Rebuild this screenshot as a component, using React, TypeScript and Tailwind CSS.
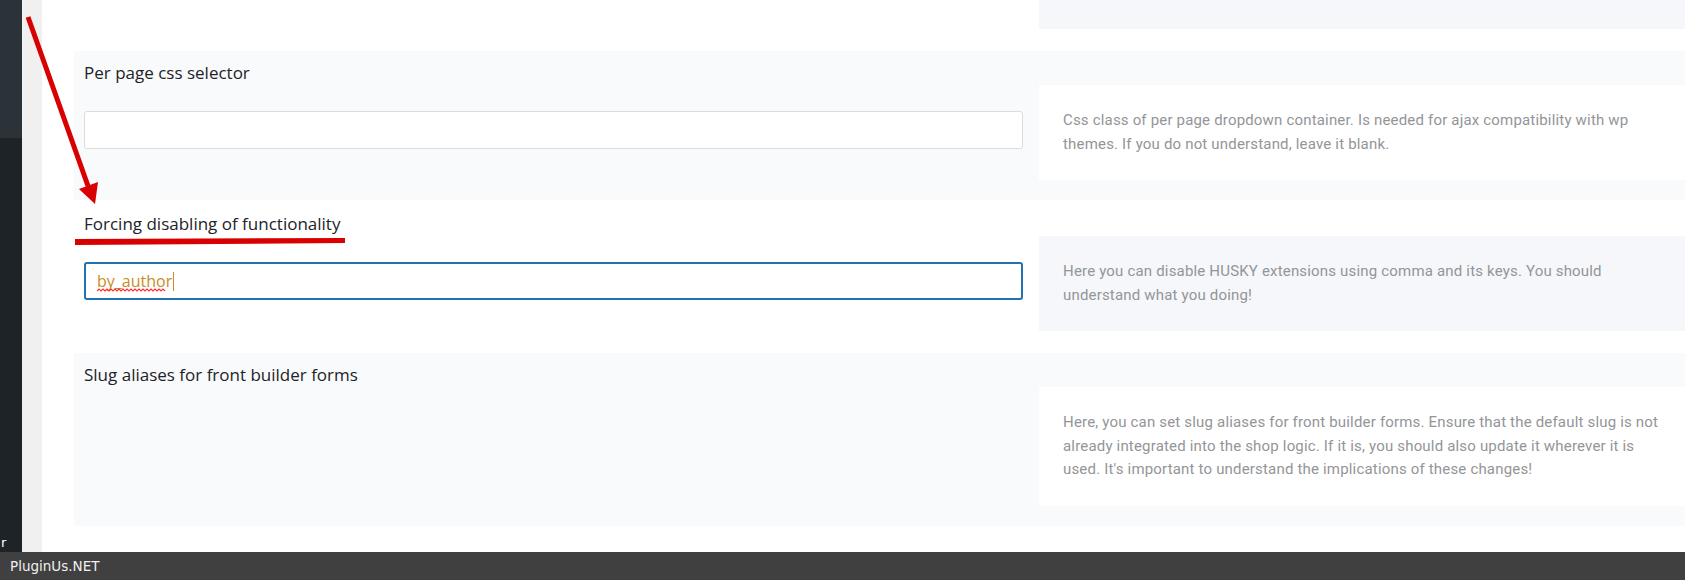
import React from "react";

const titleFont = { fontFamily: '"Open Sans", "Noto Sans", sans-serif' };
const descFont = { fontFamily: 'Roboto, "Liberation Sans", sans-serif' };

type RowProps = {
  light: boolean;
  title?: string;
  field?: "empty" | "focused" | "none";
  lines: string[];
};

function Row({ light, title, field = "none", lines }: RowProps) {
  return (
    <section
      className={
        light
          ? "bg-[#f9fafc] pt-[10px] pb-[20px] pl-[10px]"
          : "bg-white pt-[10px] pb-[20px] pl-[10px]"
      }
    >
      <h3 className="h-6 text-[17px] leading-6 text-[#1d2327]" style={titleFont}>
        {title}
      </h3>
      <div className="flex">
        <div className="w-[939px] shrink-0 pt-[26px]">
          {field === "empty" && (
            <div className="h-[38px] rounded-[3px] border border-[#dcdcde] bg-white" />
          )}
          {field === "focused" && (
            <div className="relative flex h-[38px] items-center rounded-[3px] border-2 border-[#2271b1] bg-white pl-[11px]">
              <span className="relative text-[16px] leading-6 text-[#c98b26]" style={titleFont}>
                by_author
                <svg
                  className="absolute left-0 top-[19px]"
                  width="70"
                  height="5"
                  viewBox="0 0 70 5"
                >
                  <path
                    d="M0 3 L2 1 L4 3 L6 1 L8 3 L10 1 L12 3 L14 1 L16 3 L18 1 L20 3 L22 1 L24 3 L26 1 L28 3 L30 1 L32 3 L34 1 L36 3 L38 1 L40 3 L42 1 L44 3 L46 1 L48 3 L50 1 L52 3 L54 1 L56 3 L58 1 L60 3 L62 1 L64 3 L66 1 L68 3"
                    fill="none"
                    stroke="#ff2d2d"
                    strokeWidth="1.1"
                  />
                </svg>
              </span>
              <span className="ml-[1px] h-[19px] w-[1px] bg-[#c98b26]" />
            </div>
          )}
        </div>
        <div
          className={
            light
              ? "ml-4 flex-1 bg-white px-6 py-6 text-[15px] leading-[23.5px] tracking-[0.18px] text-[#939598]"
              : "ml-4 flex-1 bg-[#f6f7fb] px-6 py-6 text-[15px] leading-[23.5px] tracking-[0.18px] text-[#939598]"
          }
          style={descFont}
        >
          {lines.map((l, i) => (
            <div key={i} className="whitespace-nowrap">
              {l}
            </div>
          ))}
        </div>
      </div>
    </section>
  );
}

export default function App() {
  return (
    <div className="relative flex h-[580px] w-[1685px] flex-col overflow-hidden bg-white">
      <div className="flex min-h-0 flex-1">
        <aside className="flex w-[22px] shrink-0 flex-col overflow-hidden bg-[#1d2327]">
          <div className="h-[138px] bg-[#2c3338]" />
          <div className="flex-1" />
          <div
            className="pl-[1px] text-[13px] leading-[18px] text-white"
            style={{ fontFamily: '"DejaVu Sans", sans-serif' }}
          >
            r
          </div>
        </aside>
        <div className="w-[20px] shrink-0 bg-[#f0f0f1]" />
        <main className="flex min-w-0 flex-1 flex-col gap-[2px] pl-[32px]">
          <section className="bg-white pb-[20px] pl-[10px]">
            <div className="flex">
              <div className="w-[939px] shrink-0" />
              <div className="ml-4 h-[29px] flex-1 bg-[#f6f7fb]" />
            </div>
          </section>
          <Row
            light
            title="Per page css selector"
            field="empty"
            lines={[
              "Css class of per page dropdown container. Is needed for ajax compatibility with wp",
              "themes. If you do not understand, leave it blank.",
            ]}
          />
          <Row
            light={false}
            title="Forcing disabling of functionality"
            field="focused"
            lines={[
              "Here you can disable HUSKY extensions using comma and its keys. You should",
              "understand what you doing!",
            ]}
          />
          <Row
            light
            title="Slug aliases for front builder forms"
            lines={[
              "Here, you can set slug aliases for front builder forms. Ensure that the default slug is not",
              "already integrated into the shop logic. If it is, you should also update it wherever it is",
              "used. It's important to understand the implications of these changes!",
            ]}
          />
        </main>
      </div>
      <footer
        className="flex h-[28px] shrink-0 items-center bg-[#404040] pl-[10px] text-[13.5px] text-[#f0f0f0]"
        style={{ fontFamily: '"DejaVu Sans", sans-serif' }}
      >
        PluginUs.NET
      </footer>
      <svg
        className="pointer-events-none absolute left-0 top-0"
        width="400"
        height="260"
        viewBox="0 0 400 260"
      >
        <line x1="28" y1="17" x2="88" y2="186" stroke="#d80000" strokeWidth="5" />
        <polygon points="95,204 98,182 79,189" fill="#d80000" />
        <polygon points="75,239 345,238 345,243 75,245" fill="#d80000" />
      </svg>
    </div>
  );
}
